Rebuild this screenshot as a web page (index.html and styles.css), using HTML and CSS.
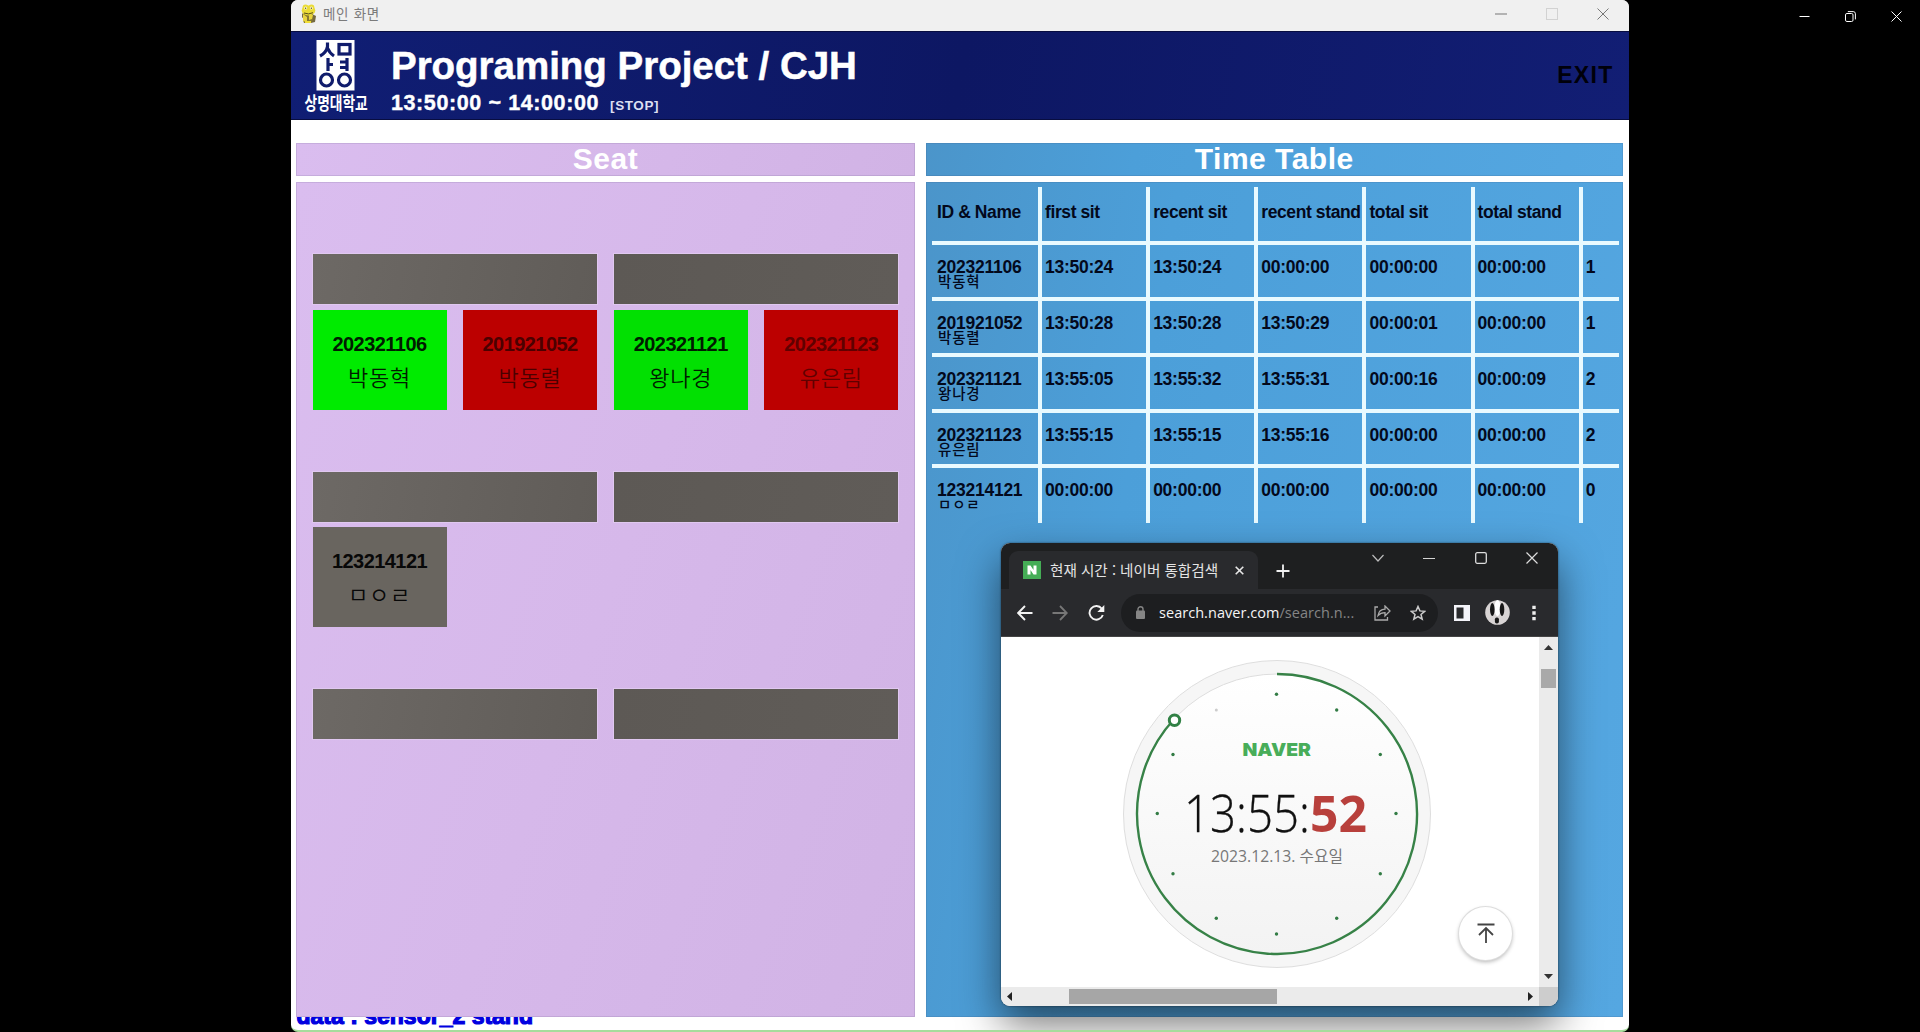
FILE: index.html
```html
<!DOCTYPE html>
<html lang="ko">
<head>
<meta charset="utf-8">
<title>메인 화면</title>
<link rel="stylesheet" href="styles.css">
</head>
<body>
<div class="viewer-controls">
  <svg width="11" height="11" viewBox="0 0 11 11"><path d="M.5 5.5h10"/></svg>
  <svg width="11" height="11" viewBox="0 0 11 11"><rect x=".5" y="2.5" width="7.5" height="8" rx="1.4"/><path d="M2.8.6h5.400q2.200 0 2.200 2.200v5.600"/></svg>
  <svg width="11" height="11" viewBox="0 0 11 11"><path d="M.5.5l10 10M10.500.5l-10 10"/></svg>
</div>

<main class="app">
  <div class="titlebar">
    <svg class="snake" width="17" height="20" viewBox="0 0 17 20">
      <path d="M2 10l2-2 1 4-3 2zM12 10l4 2-1 6-4 1z" fill="#756a42"/>
      <path d="M4 9h9v7l-2 3H4l-1-3z" fill="#857831"/>
      <path d="M3 10l4 3v5l-4-1zM9 11h4l-1 4-3 1z" fill="#e8d33f"/>
      <ellipse cx="8.500" cy="6.500" rx="6.800" ry="5" fill="#eadb36"/>
      <circle cx="5.500" cy="3.500" r="2.900" fill="#eadb36"/><circle cx="11.500" cy="3.500" r="2.900" fill="#eadb36"/>
      <circle cx="5.700" cy="4" r="1.500" fill="#fffbd0"/><circle cx="11.300" cy="4" r="1.500" fill="#fffbd0"/>
      <path d="M5.700 3.500v1.500M11.300 3.500v1.500M4 9q4.500 2 9-.3" stroke="#544a1b" fill="none"/>
      <path d="M5 18h6" stroke="#f1de35" stroke-width="2"/>
    </svg>
    <span class="titlebar-text">메인 화면</span>
    <div class="titlebar-buttons">
      <svg width="12" height="12" viewBox="0 0 12 12"><path d="M0 6h12" stroke="#777"/></svg>
      <svg width="12" height="12" viewBox="0 0 12 12"><rect x=".5" y=".5" width="11" height="11" stroke="#d2d2d2"/></svg>
      <svg width="12" height="12" viewBox="0 0 12 12"><path d="M.5.5l11 11M11.500.5l-11 11" stroke="#777"/></svg>
    </div>
  </div>

  <header class="banner">
    <svg class="school" width="66" height="76" viewBox="0 0 66 76">
      <rect x="13.500" y="0" width="38" height="50.500" fill="#fff"/>
      <g fill="none" stroke="#101c6c" stroke-width="3.200">
        <path d="M24.500 2.500v4q-1 6-7.500 9.500M24.500 8q2 5 6.500 8"/>
        <rect x="36" y="4.500" width="11" height="9.500"/>
        <path d="M25 18v13M25 24.500h5M37 22h6M37 27.500h6M44 18v13"/>
        <circle cx="23.500" cy="40" r="6"/><circle cx="41.500" cy="40" r="6"/>
      </g>
      <text transform="translate(1.500 69.500) scale(.82 1.200)" textLength="77" lengthAdjust="spacingAndGlyphs">상명대학교</text>
    </svg>
    <div class="banner-text">
      <h1>Programing Project / CJH</h1>
      <p><span class="period">13:50:00 ~ 14:00:00</span><span class="stop">[STOP]</span></p>
    </div>
    <span class="exit">EXIT</span>
  </header>

  <div class="columns">
    <section class="seat-side">
      <h2 class="purple">Seat</h2>
      <div class="room purple">
        <div class="block">
          <div class="desk d1"></div><div class="desk d2"></div>
          <div class="seat sit"><b>202321106</b><span>박동혁</span></div>
          <div class="seat stand"><b>201921052</b><span>박동렬</span></div>
          <div class="seat sit dim"><b>202321121</b><span>왕나경</span></div>
          <div class="seat stand faint"><b>202321123</b><span>유은림</span></div>
        </div>
        <div class="block">
          <div class="desk d1"></div><div class="desk d2"></div>
          <div class="seat empty"><b>123214121</b><span>ㅁㅇㄹ</span></div>
        </div>
        <div class="block">
          <div class="desk d1"></div><div class="desk d2"></div>
        </div>
      </div>
    </section>

    <section class="time-side">
      <h2 class="blue">Time Table</h2>
      <div class="board blue">
        <div class="table">
          <div class="row head"><div>ID &amp; Name</div><div>first sit</div><div>recent sit</div><div>recent stand</div><div>total sit</div><div>total stand</div><div></div></div>
          <div class="row"><div>202321106<span>박동혁</span></div><div>13:50:24</div><div>13:50:24</div><div>00:00:00</div><div>00:00:00</div><div>00:00:00</div><div>1</div></div>
          <div class="row"><div>201921052<span>박동렬</span></div><div>13:50:28</div><div>13:50:28</div><div>13:50:29</div><div>00:00:01</div><div>00:00:00</div><div>1</div></div>
          <div class="row"><div>202321121<span>왕나경</span></div><div>13:55:05</div><div>13:55:32</div><div>13:55:31</div><div>00:00:16</div><div>00:00:09</div><div>2</div></div>
          <div class="row"><div>202321123<span>유은림</span></div><div>13:55:15</div><div>13:55:15</div><div>13:55:16</div><div>00:00:00</div><div>00:00:00</div><div>2</div></div>
          <div class="row"><div>123214121<span>ㅁㅇㄹ</span></div><div>00:00:00</div><div>00:00:00</div><div>00:00:00</div><div>00:00:00</div><div>00:00:00</div><div>0</div></div>
        </div>
      </div>
    </section>
  </div>
  <footer class="log"><span>data : sensor_2 stand</span></footer>

  <div class="browser">
    <div class="tabs">
      <div class="tab">
        <svg width="18" height="18" viewBox="0 0 18 18"><rect width="18" height="18" fill="#45ad56"/><path d="M4.500 13.500v-9h3l3 4.500v-4.500h3v9h-3l-3-4.500v4.500z" fill="#fff"/></svg>
        <span>현재 시간 : 네이버 통합검색</span>
        <svg width="9" height="9" viewBox="0 0 9 9"><path d="M.7.7l7.600 7.600M8.300.7L.7 8.300" stroke="#e8e8e8" stroke-width="1.600"/></svg>
      </div>
      <svg class="plus" width="14" height="14" viewBox="0 0 14 14"><path d="M7 .5v13M.5 7h13" stroke="#f1f1f1" stroke-width="1.800"/></svg>
      <div class="browser-buttons">
        <svg width="12" height="12" viewBox="0 0 12 12"><path d="M.5 3l5.500 6 5.500-6" stroke="#bbb" stroke-width="1.200"/></svg>
        <svg width="12" height="12" viewBox="0 0 12 12"><path d="M0 6.500h12" stroke="#d4d4d4"/></svg>
        <svg width="12" height="12" viewBox="0 0 12 12"><rect x=".7" y=".7" width="10.600" height="10.600" rx="1.500" stroke="#ddd" stroke-width="1.300"/></svg>
        <svg width="12" height="12" viewBox="0 0 12 12"><path d="M.5.5l11 11M11.500.5l-11 11" stroke="#ddd" stroke-width="1.200"/></svg>
      </div>
    </div>
    <div class="toolbar">
      <svg width="16" height="16" viewBox="0 0 16 16"><path d="M15.500 8H1.500M8 1L1.200 8 8 15" stroke="#f3f3f3" stroke-width="1.900"/></svg>
      <svg width="16" height="16" viewBox="0 0 16 16"><path d="M.5 8h14M8 1l6.800 7L8 15" stroke="#777" stroke-width="1.800"/></svg>
      <svg width="17" height="16" viewBox="0 0 17 16"><path d="M13.800 3.800A6.800 6.800 0 1 0 14.800 10" stroke="#f3f3f3" stroke-width="1.900"/><path d="M16.300 0v7H9.300z" fill="#f3f3f3"/></svg>
      <div class="address">
        <svg width="9" height="13" viewBox="0 0 9 13"><rect y="4.500" width="9" height="8.500" rx="1" fill="#858585"/><path d="M2 5V3a2.500 2.200 0 0 1 5 0v2" stroke="#858585" stroke-width="1.400"/></svg>
        <span class="url">search.naver.com<i>/search.n...</i></span>
        <svg width="17" height="16" viewBox="0 0 17 16"><path d="M4 2H1v13h12.500v-3M4 10.500q1-6 7-6.300V1l5 5-5 5V7.700q-4.500 0-7 2.800z" stroke="#aaa" stroke-width="1.300"/></svg>
        <svg width="16" height="16" viewBox="0 0 16 16"><path d="M8 1.500l1.900 4.400 4.800.4-3.700 3.100 1.200 4.800L8 11.700l-4.200 2.500L5 9.400 1.300 6.300l4.800-.4z" stroke="#ccc" stroke-width="1.500"/></svg>
      </div>
      <svg width="16" height="16" viewBox="0 0 16 16"><path d="M0 0h16v16H0zM2.500 2.500v11h7v-11z" fill="#f4f4fa" fill-rule="evenodd"/></svg>
      <svg width="25" height="25" viewBox="0 0 25 25"><circle cx="12.500" cy="12.500" r="12.300" fill="#d8d4d4"/><ellipse cx="12.500" cy="8" rx="3" ry="8" fill="#fff"/><ellipse cx="7.300" cy="9.500" rx="2.300" ry="6.500" fill="#171717"/><ellipse cx="17" cy="9.500" rx="2.300" ry="6.500" fill="#171717"/><rect x="9.900" y="17.500" width="4" height="6" rx="1.800" fill="#171717"/></svg>
      <svg width="4" height="16" viewBox="0 0 4 16"><path d="M.3.7h3.400v3.400H.3zM.3 6.300h3.400v3.400H.3zM.3 11.900h3.400v3.400H.3z" fill="#eee"/></svg>
    </div>
    <div class="page">
      <svg class="clock" width="310" height="310" viewBox="-155 -155 310 310">
        <defs>
          <linearGradient id="face" x1="0" y1="0" x2="0" y2="1"><stop offset="0" stop-color="#fff"/><stop offset="1" stop-color="#f3f3f3"/></linearGradient>
        </defs>
        <circle r="153.500" fill="#f6f6f6" stroke="#dedede"/>
        <circle r="140" fill="url(#face)" stroke="#ddd"/>
        <path d="M0-140A140 140 0 1 1-102.800-95" fill="none" stroke="#378247" stroke-width="2.400"/>
        <circle cx="-102.500" cy="-93.700" r="5.200" fill="#fff" stroke="#318145" stroke-width="3"/>
        <g fill="#337c45">
          <circle cx="-.5" cy="-119.700" r="1.700"/><circle cx="59.700" cy="-104" r="1.700"/><circle cx="103.300" cy="-59.500" r="1.700"/>
          <circle cx="119" cy="-.5" r="1.700"/><circle cx="103.300" cy="59.700" r="1.700"/><circle cx="59.700" cy="104.300" r="1.700"/>
          <circle cx="-.5" cy="120" r="1.700"/><circle cx="-60.700" cy="104.300" r="1.700"/><circle cx="-104" cy="59.700" r="1.700"/>
          <circle cx="-119.700" cy="-.5" r="1.700"/><circle cx="-104" cy="-59.500" r="1.700"/><circle cx="-60.700" cy="-104" r="1.500" fill="#ccc"/>
        </g>
        <text class="naver" x="-34.500" y="-58" textLength="68.500" lengthAdjust="spacingAndGlyphs">NAVER</text>
        <text class="hm" x="-93" y="18" textLength="126" lengthAdjust="spacingAndGlyphs">13:55:</text>
        <text class="sec" x="33" y="18" textLength="57" lengthAdjust="spacingAndGlyphs">52</text>
        <text class="date" x="-66" y="48" textLength="132" lengthAdjust="spacingAndGlyphs">2023.12.13. 수요일</text>
      </svg>
      <div class="to-top"><svg width="18" height="20" viewBox="0 0 18 20"><path d="M.5 1.500h17M9 20V5.500M2 12l7-7 7 7" stroke="#444" stroke-width="1.800"/></svg></div>
    </div>
    <div class="vbar">
      <svg width="9" height="5" viewBox="0 0 9 5"><path d="M0 5L4.500 0 9 5z" fill="#333"/></svg>
      <i></i>
      <svg width="9" height="5" viewBox="0 0 9 5"><path d="M0 0l4.500 5L9 0z" fill="#333"/></svg>
    </div>
    <div class="hbar">
      <svg width="5" height="9" viewBox="0 0 5 9"><path d="M5 0L0 4.500 5 9z" fill="#222"/></svg>
      <i></i>
      <svg width="5" height="9" viewBox="0 0 5 9"><path d="M0 0l5 4.500L0 9z" fill="#222"/></svg>
    </div>
    <div class="corner"></div>
  </div>
</main>
</body>
</html>
```
FILE: styles.css
```css
* { box-sizing: border-box; }
body {
  margin: 0;
  height: 1032px;
  background: #000;
  overflow: hidden;
  font-family: "Liberation Sans", "Noto Sans CJK KR", sans-serif;
}
svg { display: block; flex: none; fill: none; }
h1, h2, p { margin: 0; }

.viewer-controls {
  position: absolute;
  top: 11px;
  right: 18px;
  display: flex;
  gap: 35px;
}
.viewer-controls svg { stroke: #fff; }

/* main application window */
.app {
  position: relative;
  width: 1338px;
  height: 1032px;
  margin-left: 290.5px;
  background: #fff;
  border-radius: 7px;
  border-bottom: 2px solid #a6dc9c;
  overflow: hidden;
}
.titlebar {
  display: flex;
  align-items: center;
  height: 31px;
  padding: 0 20px 4px 9.500px;
  background: #f0f0f0;
}
.titlebar-text {
  margin-left: 6px;
  padding-bottom: 2px;
  font: 13.5px/20px "Noto Sans CJK KR", sans-serif;
  letter-spacing: .7px;
  color: #7b7b7b;
}
.titlebar-buttons { display: flex; gap: 39px; margin-left: auto; }

.banner {
  display: flex;
  height: 89px;
  padding: 8px 14px 0 12.5px;
  background: linear-gradient(100deg, #101e74, #0d1763 50%, #121e74);
  border-top: 1px solid #080d40;
  border-bottom: 1px solid #080d40;
  color: #fff;
}
.school text { font: 700 15.500px "Noto Sans CJK KR", sans-serif; fill: #fff; }
.banner-text { margin-left: 22px; padding-top: 4px; }
.banner h1 { font-size: 38.5px; line-height: 44px; letter-spacing: -.02px; white-space: nowrap; -webkit-text-stroke: .5px #fff; }
.banner p { display: flex; align-items: baseline; line-height: 24px; font-weight: 700; margin-top: 3px; }
.period { font-size: 21.5px; letter-spacing: .6px; -webkit-text-stroke: .4px #fff; }
.stop { font-size: 13.5px; letter-spacing: .6px; margin-left: 11px; color: #dcdff2; }
.exit { margin: 22px 1px 0 auto; font-size: 23px; font-weight: 700; line-height: 27px; letter-spacing: 1.300px; color: #00000a; }

.columns { display: flex; gap: 11px; padding: 23px 6px 0 5.5px; }
.seat-side { width: 619px; }
.time-side { flex: 1; }
.purple { background: linear-gradient(110deg, #dabdef, #d6b8ea 50%, #d1b3e5); }
.blue { background: linear-gradient(100deg, #4b95ca, #4c9fd9 30%, #55a7e1); }
h2 {
  height: 33px;
  font-size: 30px;
  line-height: 32px;
  letter-spacing: .5px;
  text-align: center;
  color: #fff;
  box-shadow: inset 0 0 0 1px rgba(60, 60, 90, .12);
}
.room, .board {
  height: 835px;
  margin-top: 6px;
  box-shadow: inset 0 0 0 1px rgba(60, 60, 90, .12);
}

/* seat map */
.room { padding: 72.4px 17px 0 16.5px; }
.block {
  display: grid;
  grid-template-columns: repeat(4, 134px);
  grid-template-rows: 50px 100.5px;
  column-gap: 16.6px;
  row-gap: 5.5px;
  height: 217.3px;
}
.desk { grid-column: span 2; box-shadow: 0 0 0 1px #e0c8f0; }
.d1 { background: linear-gradient(100deg, #6d6965, #605c58); }
.d2 { background: linear-gradient(100deg, #5d5955, #605c58); }
.seat { display: flex; flex-direction: column; align-items: center; padding-top: 22px; }
.seat b { font-size: 20px; line-height: 24px; letter-spacing: -.55px; }
.seat span { margin-top: 4px; font: 350 22px/32px "Noto Sans CJK KR", sans-serif; letter-spacing: .8px; }
.sit { background: #00eb00; color: #001c00; }
.sit.dim { background: #02e002; }
.stand { background: #bc0000; color: #4b0000; }
.stand.faint { color: #600000; }
.empty { background: #69655f; color: #080808; height: 100px; }

/* attendance table */
.board { padding: 5px 4px 0 6px; }
.table {
  display: grid;
  grid-template-rows: 58.3px repeat(4, 55.75px) 54.7px;
}
.row {
  display: grid;
  grid-template-columns: 110px repeat(5, 108.15px) 1fr;
  font-size: 17.5px;
  font-weight: 700;
  line-height: 20px;
  letter-spacing: -.25px;
  color: #03091c;
}
.row > div {
  padding: 12px 0 0 3px;
  border-right: 4px solid #e9faff;
  border-bottom: 4px solid #e9faff;
  white-space: nowrap;
}
.row > div:first-child { padding-left: 5px; }
.row > div:last-child { border-right: 0; }
.row:last-child > div { border-bottom: 0; }
.head > div { padding-top: 15px; letter-spacing: -.4px; }
.row span {
  display: block;
  margin: -6px 0 0 1px;
  font: 500 14.5px/20px "Noto Sans CJK KR", sans-serif;
  letter-spacing: .8px;
}

.log { height: 13px; padding-left: 6px; overflow: hidden; }
.log span {
  display: block;
  margin-top: -14px;
  font-size: 23px;
  font-weight: 700;
  line-height: 26px;
  color: #0000e0;
  -webkit-text-stroke: 1.2px #0000e0;
}

/* floating browser window */
.browser {
  position: absolute;
  left: 710.5px;
  top: 543px;
  width: 557px;
  height: 462.5px;
  display: grid;
  grid-template: 46px 48px 1fr 19px / 1fr 19px;
  border-radius: 9px;
  overflow: hidden;
  background: #fff;
  box-shadow: 0 0 2px rgba(0, 0, 0, .6), 0 18px 42px rgba(0, 0, 0, .55);
}
.tabs { grid-column: span 2; display: flex; background: #1e1f20; }
.tab {
  display: flex;
  align-items: center;
  width: 249px;
  height: 38px;
  margin: 8px 0 0 8px;
  padding: 0 13px 0 14px;
  border-radius: 9px 9px 0 0;
  background: #292a2d;
}
.tab span {
  width: 176px;
  margin: 0 9px 0 9px;
  font: 14.600px/22px "Noto Sans CJK KR", sans-serif;
  white-space: nowrap;
  color: #e4e4e4;
}
.plus { margin: 21px 0 0 18px; }
.browser-buttons { display: flex; gap: 39.5px; margin: 9px 20px 0 auto; }
.toolbar {
  grid-column: span 2;
  display: flex;
  align-items: center;
  padding: 0 22px 0 16px;
  background: #292a2d;
  border-bottom: 1px solid #444;
}
.toolbar > svg:nth-child(2) { margin-left: 19px; }
.toolbar > svg:nth-child(3) { margin-left: 20px; }
.address {
  display: flex;
  align-items: center;
  width: 317px;
  height: 38px;
  margin: 0 16px 0 16px;
  padding: 0 12px 0 15px;
  border-radius: 19px;
  background: #1d1e20;
}
.url { width: 203px; margin: 0 auto 0 14px; font: 14.500px/20px "Open Sans", sans-serif; letter-spacing: .04px; color: #f5f5f5; white-space: nowrap; }
.url i { font-style: normal; color: #858585; }
.address svg:last-child { margin-left: 19px; }
.toolbar > svg:nth-child(6) { margin-left: 15px; }
.toolbar > svg:nth-child(7) { margin-left: auto; }

.page { position: relative; padding: 21.5px 0 0 121px; overflow: hidden; }
.clock .naver { font: 900 18px Inter, sans-serif; fill: #48ad59; }
.clock .hm { font: 300 51px "Open Sans", sans-serif; fill: #111; stroke: #111; stroke-width: .3px; }
.clock .sec { font: 700 51px "Open Sans", sans-serif; fill: #b8403c; }
.clock .date { font: 400 15.5px "Open Sans", "Noto Sans CJK KR", sans-serif; fill: #777; }
.to-top {
  position: absolute;
  right: 27px;
  bottom: 27px;
  display: grid;
  place-items: center;
  width: 53px;
  height: 53px;
  border-radius: 50%;
  background: #fff;
  box-shadow: 0 0 0 1px #ddd, 0 2px 4px rgba(0, 0, 0, .3);
}
.vbar, .hbar { display: flex; align-items: center; background: #ebebeb; }
.vbar { flex-direction: column; padding: 8px 0; }
.vbar i { width: 15px; height: 19px; margin: 19px 0 auto; background: #a9a9a9; }
.hbar { padding: 0 6px; }
.hbar i { width: 208px; height: 15px; margin: 0 auto 0 57px; background: #a6a6a6; }
.corner { background: #cdcdcd; }
```
